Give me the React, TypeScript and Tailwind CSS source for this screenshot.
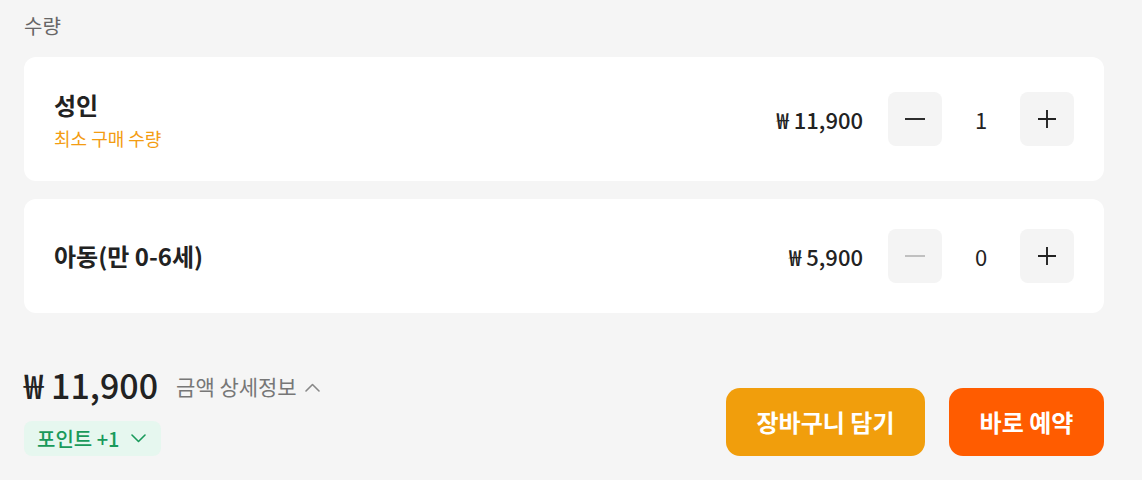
interface Row {
  name: string;
  note?: string;
  price: string;
  count: number;
}

const rows: Row[] = [
  { name: '성인', note: '최소 구매 수량', price: '₩ 11,900', count: 1 },
  { name: '아동(만 0-6세)', price: '₩ 5,900', count: 0 },
];

function MinusIcon({ className }: { className?: string }) {
  return (
    <svg width="20" height="20" viewBox="0 0 20 20" className={className}>
      <path d="M0 10h20" stroke="currentColor" strokeWidth="1.9" />
    </svg>
  );
}

function PlusIcon({ className }: { className?: string }) {
  return (
    <svg width="20" height="20" viewBox="0 0 20 20" className={className}>
      <path d="M1 10h18M10 1v18" stroke="currentColor" strokeWidth="1.9" />
    </svg>
  );
}

// chevron drawn to the exact 15x9 box of the reference
function Chevron({ up, className }: { up?: boolean; className?: string }) {
  return (
    <svg width="15" height="9" viewBox="0 0 15 9" className={className} fill="none">
      <path
        d={up ? 'M1 8l6.5-6.5L14 8' : 'M1 1l6.5 6.5L14 1'}
        stroke="currentColor"
        strokeWidth="1.6"
        strokeLinecap="round"
        strokeLinejoin="round"
      />
    </svg>
  );
}

function Stepper({ count }: { count: number }) {
  const disabled = count === 0;
  return (
    <div className="flex items-center">
      <button className="w-[54px] h-[54px] rounded-lg bg-[#f4f4f4] flex items-center justify-center">
        <MinusIcon className={disabled ? 'text-[#bdbdbd]' : 'text-[#222]'} />
      </button>
      <span className="w-[78px] text-center text-[22px] text-[#222]">{count}</span>
      <button className="w-[54px] h-[54px] rounded-lg bg-[#f4f4f4] flex items-center justify-center">
        <PlusIcon className="text-[#222]" />
      </button>
    </div>
  );
}

export default function App() {
  return (
    <div className="min-h-screen bg-[#f5f5f5] pl-6 pr-[38px] pt-[12px] font-['Noto_Sans_CJK_KR','Noto_Sans',sans-serif]">
      <div className="text-[20px] text-[#666] leading-[28px]">수량</div>

      <div className="mt-[17px] flex flex-col gap-[18px]">
        {rows.map((r) => (
          <div key={r.name} className="bg-white rounded-xl px-[30px] py-[30px] flex items-center justify-between">
            <div className="flex flex-col">
              <span className="text-[24px] font-bold text-[#222] leading-[36px]">{r.name}</span>
              {r.note && <span className="text-[18px] text-[#f39c12] leading-[26px] mt-[2px]">{r.note}</span>}
            </div>
            <div className="flex items-center gap-[25px]">
              <span className="text-[22px] font-medium text-[#222]">{r.price}</span>
              <Stepper count={r.count} />
            </div>
          </div>
        ))}
      </div>

      <div className="mt-[50px] flex items-end justify-between">
        <div className="flex flex-col">
          <div className="flex items-center gap-[18px] h-[44px]">
            <span className="text-[34px] font-medium text-[#222] leading-[44px]">₩ 11,900</span>
            <span className="flex items-center gap-[8px] text-[21px] text-[#777] mt-[4px]">
              금액 상세정보
              <Chevron up className="text-[#888]" />
            </span>
          </div>
          <div className="mt-[14px] self-start h-[35px] pl-[13px] pr-[15px] rounded-lg bg-[#e6f7ef] flex items-center gap-[11px] text-[20px] font-medium text-[#199a5b]">
            포인트 +1
            <Chevron className="text-[#199a5b]" />
          </div>
        </div>
        <div className="flex items-center gap-[24px]">
          <button className="w-[199px] h-[68px] rounded-[14px] bg-[#f19e0c] text-white text-[24px] font-bold">
            장바구니 담기
          </button>
          <button className="w-[155px] h-[68px] rounded-[14px] bg-[#ff5c00] text-white text-[24px] font-bold">
            바로 예약
          </button>
        </div>
      </div>
    </div>
  );
}
